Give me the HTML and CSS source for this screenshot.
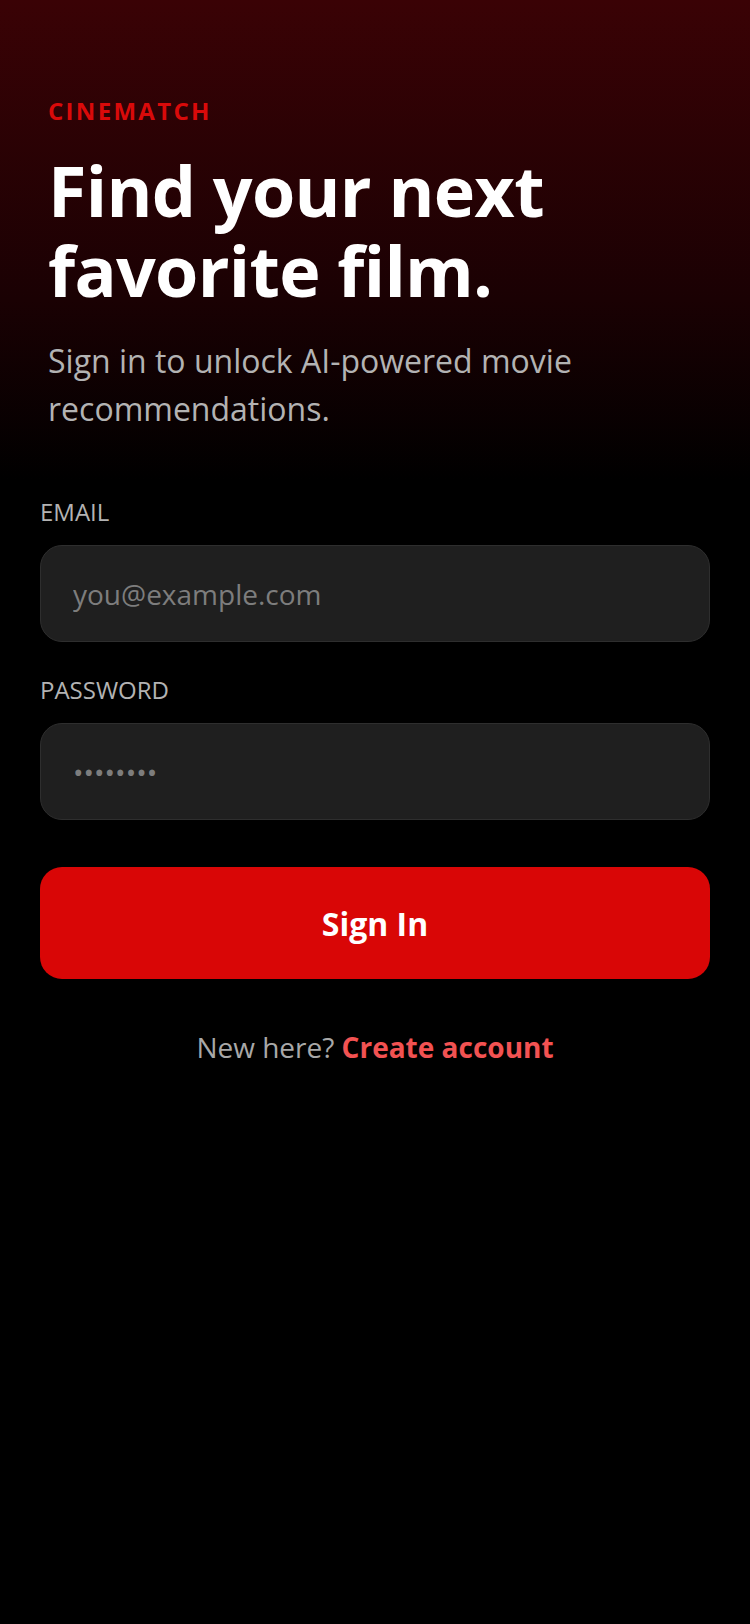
FILE: index.html
```html
<!DOCTYPE html>
<html lang="en">
<head>
    <meta charset="UTF-8">
    <meta name="viewport" content="width=device-width, initial-scale=1.0">
    <title>CineMatch - Sign In</title>
    <link rel="stylesheet" href="styles.css">
</head>
<body>

    <div class="page">
        <div class="hero">
            <div class="brand">CINEMATCH</div>
            <h1 class="title">Find your next favorite film.</h1>
            <p class="subtitle">Sign in to unlock AI-powered movie recommendations.</p>
        </div>

        <form class="login" onsubmit="return false;">
            <div class="field">
                <label for="email">EMAIL</label>
                <input type="email" id="email" placeholder="you@example.com">
            </div>
            <div class="field">
                <label for="password">PASSWORD</label>
                <input type="password" id="password" placeholder="••••••••">
            </div>
            <button type="submit" class="submit">Sign In</button>
            <p class="signup">New here? <a href="#">Create account</a></p>
        </form>
    </div>

</body>
</html>
```

FILE: styles.css
```css
body {
    font-family: 'Open Sans', 'Noto Sans', sans-serif;
    background-color: #000;
    color: #fff;
    margin: 0;
}
.page {
    min-height: 1624px;
    background: linear-gradient(180deg, #3a0205 0px, #1a0103 300px, #000 480px);
}
.hero {
    padding: 93px 48px 0;
}
.brand {
    color: #d90a0a;
    font-size: 24px;
    font-weight: 700;
    letter-spacing: 2.3px;
    line-height: 36px;
}
.title {
    font-size: 70px;
    font-weight: 700;
    line-height: 80px;
    letter-spacing: -0.7px;
    margin: 21px 0 0;
}
.subtitle {
    color: #b3b3b3;
    font-size: 32px;
    line-height: 48px;
    margin: 27px 0 0;
    padding-right: 80px;
}
.login {
    padding: 61px 40px 0;
}
.field {
    margin-bottom: 30px;
}
.field label {
    display: block;
    color: #b3b3b3;
    font-size: 24px;
    line-height: 36px;
    margin-bottom: 15px;
}
.field input {
    display: block;
    width: 100%;
    height: 97px;
    box-sizing: border-box;
    padding: 0 32px;
    background-color: #1f1f1f;
    border: 1.5px solid #2e2e2e;
    border-radius: 22px;
    color: #fff;
    font-family: inherit;
    font-size: 28px;
    outline: none;
}
.field input::placeholder {
    color: #7d7d7d;
}
.submit {
    display: block;
    width: 100%;
    height: 112px;
    margin-top: 47px;
    border: none;
    border-radius: 22px;
    background-color: #d90606;
    color: #fff;
    font-family: inherit;
    font-size: 32px;
    font-weight: 700;
    cursor: pointer;
}
.signup {
    text-align: center;
    color: #a8a8a8;
    font-size: 28px;
    line-height: 42px;
    margin: 47px 0 0;
}
.signup a {
    color: #f25252;
    font-weight: 700;
    text-decoration: none;
}
```
